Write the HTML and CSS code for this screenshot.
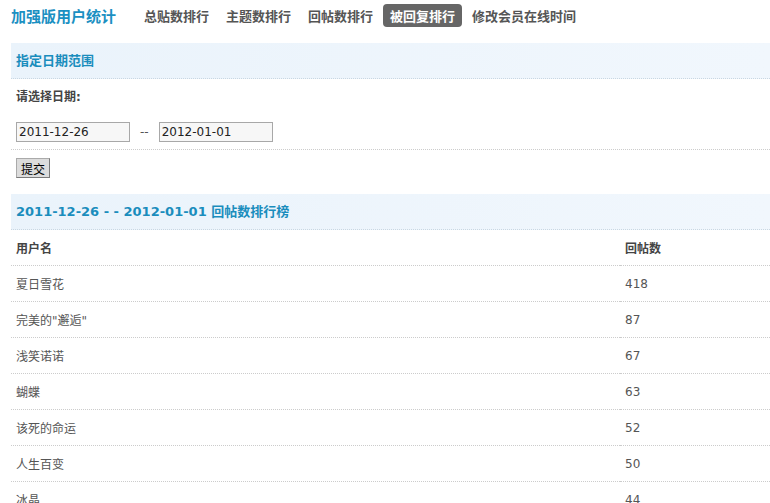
FILE: index.html
```html
<!DOCTYPE html>
<html lang="zh-CN">
<head>
<meta charset="UTF-8">
<title>加强版用户统计</title>
<link rel="stylesheet" href="styles.css">
</head>
<body>

<div class="topbar">
  <span class="brand">加强版用户统计</span>
  <ul class="nav">
    <li><a href="#">总贴数排行</a></li>
    <li><a href="#">主题数排行</a></li>
    <li><a href="#">回帖数排行</a></li>
    <li class="current"><a href="#">被回复排行</a></li>
    <li><a href="#">修改会员在线时间</a></li>
  </ul>
</div>

<div class="box">
  <h3 class="box-title">指定日期范围</h3>
  <form class="date-form">
    <p class="label">请选择日期:</p>
    <div class="date-row">
      <input type="text" value="2011-12-26">
      <span class="sep">--</span>
      <input type="text" value="2012-01-01">
    </div>
    <div class="btn-row">
      <button type="button">提交</button>
    </div>
  </form>
</div>

<div class="box">
  <h3 class="box-title">2011-12-26 - - 2012-01-01 回帖数排行榜</h3>
  <table class="rank">
    <thead>
      <tr><th>用户名</th><th class="num">回帖数</th></tr>
    </thead>
    <tbody>
      <tr><td>夏日雪花</td><td class="num">418</td></tr>
      <tr><td>完美的"邂逅"</td><td class="num">87</td></tr>
      <tr><td>浅笑诺诺</td><td class="num">67</td></tr>
      <tr><td>蝴蝶</td><td class="num">63</td></tr>
      <tr><td>该死的命运</td><td class="num">52</td></tr>
      <tr><td>人生百变</td><td class="num">50</td></tr>
      <tr><td>冰晶</td><td class="num">44</td></tr>
    </tbody>
  </table>
</div>

</body>
</html>
```

FILE: styles.css
```css
body {
  margin: 0;
  padding: 0 0 0 11px;
  font-family: "DejaVu Sans", Verdana, "Noto Sans CJK SC", sans-serif;
  font-size: 12px;
  color: #444;
  background: #fff;
}
.topbar {
  display: flex;
  align-items: center;
  height: 30px;
}
.brand {
  font-size: 15px;
  font-weight: bold;
  color: #1b90c2;
  margin-right: 21px;
}
.nav {
  display: flex;
  list-style: none;
  margin: 0;
  padding: 0;
  gap: 3px;
}
.nav a {
  display: block;
  padding: 2px 7px;
  font-size: 13px;
  font-weight: bold;
  color: #555;
  text-decoration: none;
  border-radius: 4px;
}
.nav .current a {
  background: #666;
  color: #fff;
}
.box {
  margin-top: 13px;
}
.box + .box {
  margin-top: 4px;
}
.box-title {
  margin: 0;
  height: 36px;
  line-height: 36px;
  padding-left: 5px;
  font-size: 13px;
  font-weight: bold;
  color: #1a8dbd;
  background: linear-gradient(to right, #eaf3fb, #f1f7fd);
  border-bottom: 1px dotted #c9d7e2;
  box-sizing: border-box;
}
.date-form {
  margin: 0;
  padding: 0 5px;
}
.label {
  margin: 0;
  height: 36px;
  line-height: 36px;
  font-weight: bold;
  color: #444;
  font-size: 12px;
}
.date-row {
  display: flex;
  align-items: center;
  height: 34px;
  margin: 0 -5px;
  padding: 0 5px;
  border-bottom: 1px dotted #ccc;
}
.date-row input {
  width: 114px;
  height: 20px;
  box-sizing: border-box;
  border: 1px solid #a8a8a8;
  background: #f7f7f7;
  padding: 1px 2px;
  font-family: inherit;
  font-size: 12px;
  color: #222;
}
.sep {
  margin: 0 10px;
  color: #555;
}
.btn-row {
  padding: 8px 0 12px;
}
.btn-row button {
  height: 20px;
  padding: 0 4px;
  font-family: "Noto Sans CJK SC", sans-serif;
  font-size: 12px;
  color: #000;
  background: #dcdcdc;
  border: 1px solid #7a7a7a;
  border-top-color: #aaa;
  border-left-color: #aaa;
  border-radius: 0;
}
.rank {
  width: 100%;
  border-collapse: collapse;
}
.rank th,
.rank td {
  height: 35px;
  padding: 0 5px;
  text-align: left;
  border-bottom: 1px dotted #ccc;
}
.rank th {
  font-weight: bold;
  color: #444;
}
.rank td {
  color: #555;
}
.rank td:first-child,
.rank th:first-child {
  width: 599px;
}
```
